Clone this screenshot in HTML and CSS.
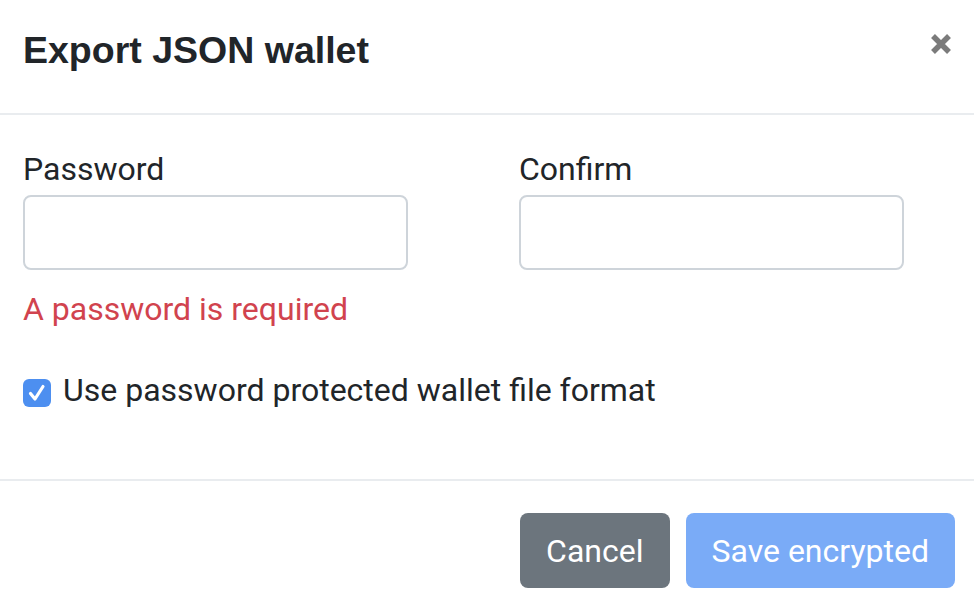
FILE: index.html
```html
<!DOCTYPE html>
<html lang="en">
<head>
<meta charset="utf-8">
<title>Export JSON wallet</title>
<link rel="stylesheet" href="styles.css">
</head>
<body>
<div class="modal">
  <header class="modal-header">
    <h5 class="modal-title">Export JSON wallet</h5>
    <button class="close" aria-label="Close">
      <svg width="22" height="22" viewBox="0 0 22 22"><path d="M3 3 L19 19 M19 3 L3 19" stroke="#7b7b7b" stroke-width="5.5" stroke-linecap="butt"/></svg>
    </button>
  </header>
  <section class="modal-body">
    <div class="form-row">
      <div class="form-group">
        <label class="label">Password</label>
        <input class="input" type="password">
        <div class="invalid">A password is required</div>
      </div>
      <div class="form-group">
        <label class="label">Confirm</label>
        <input class="input" type="password">
      </div>
    </div>
    <div class="check">
      <span class="check-box">
        <svg width="28" height="28" viewBox="0 0 28 28"><path d="M7.5 14.5 L12 20 L20 7.5" fill="none" stroke="#fff" stroke-width="3.2" stroke-linecap="round" stroke-linejoin="round"/></svg>
      </span>
      <span class="check-label">Use password protected wallet file format</span>
    </div>
  </section>
  <footer class="modal-footer">
    <button class="btn btn-secondary">Cancel</button>
    <button class="btn btn-primary" disabled>Save encrypted</button>
  </footer>
</div>
</body>
</html>
```
FILE: styles.css
```css
html, body {
  margin: 0;
  padding: 0;
  background: #fff;
}
body {
  font-family: Roboto, "Liberation Sans", sans-serif;
  color: #212529;
}
.modal {
  width: 974px;
  height: 611px;
  display: flex;
  flex-direction: column;
}
.modal-header {
  flex: none;
  box-sizing: content-box;
  height: 85px;
  padding: 28px 22px 0 23px;
  display: flex;
  justify-content: space-between;
  align-items: flex-start;
  border-bottom: 2px solid #e9ecef;
}
.modal-title {
  margin: 0;
  font-family: "Liberation Sans", Arial, sans-serif;
  font-weight: 700;
  font-size: 37.5px;
  line-height: 44px;
  color: #212529;
}
.close {
  background: none;
  border: 0;
  padding: 0;
  margin-top: 5px;
  width: 22px;
  height: 22px;
  display: flex;
}
.modal-body {
  flex: 1;
  padding: 35px 23px 0 23px;
  font-size: 32px;
  line-height: 38px;
}
.form-row {
  display: grid;
  grid-template-columns: 385px 385px;
  column-gap: 111px;
}
.form-group {
  display: flex;
  flex-direction: column;
}
.label {
  display: block;
}
.input {
  margin-top: 7px;
  width: 385px;
  height: 75px;
  box-sizing: border-box;
  border: 2px solid #ced4da;
  border-radius: 8px;
  background: #fff;
  font-size: 32px;
  padding: 0 20px;
}
.invalid {
  margin-top: 20px;
  color: #d1434e;
}
.check {
  margin-top: 43px;
  display: flex;
  align-items: center;
  gap: 12px;
}
.check-box {
  width: 28px;
  height: 28px;
  border-radius: 6px;
  background: #4d8ff0;
  display: flex;
  flex: none;
  margin-top: 5px;
}
.check-label {
  color: #212529;
}
.modal-footer {
  flex: none;
  height: 132px;
  box-sizing: border-box;
  border-top: 2px solid #e9ecef;
  padding: 32px 19px 0 0;
  display: flex;
  justify-content: flex-end;
  align-items: flex-start;
  gap: 16px;
}
.btn {
  font-family: Roboto, "Liberation Sans", sans-serif;
  font-size: 32px;
  line-height: 38px;
  height: 75px;
  padding: 0 26px;
  border: 0;
  border-radius: 8px;
  color: #fff;
  display: flex;
  align-items: center;
}
.btn-secondary {
  background: #6c757d;
}
.btn-primary {
  background: #7aabf7;
}
```
